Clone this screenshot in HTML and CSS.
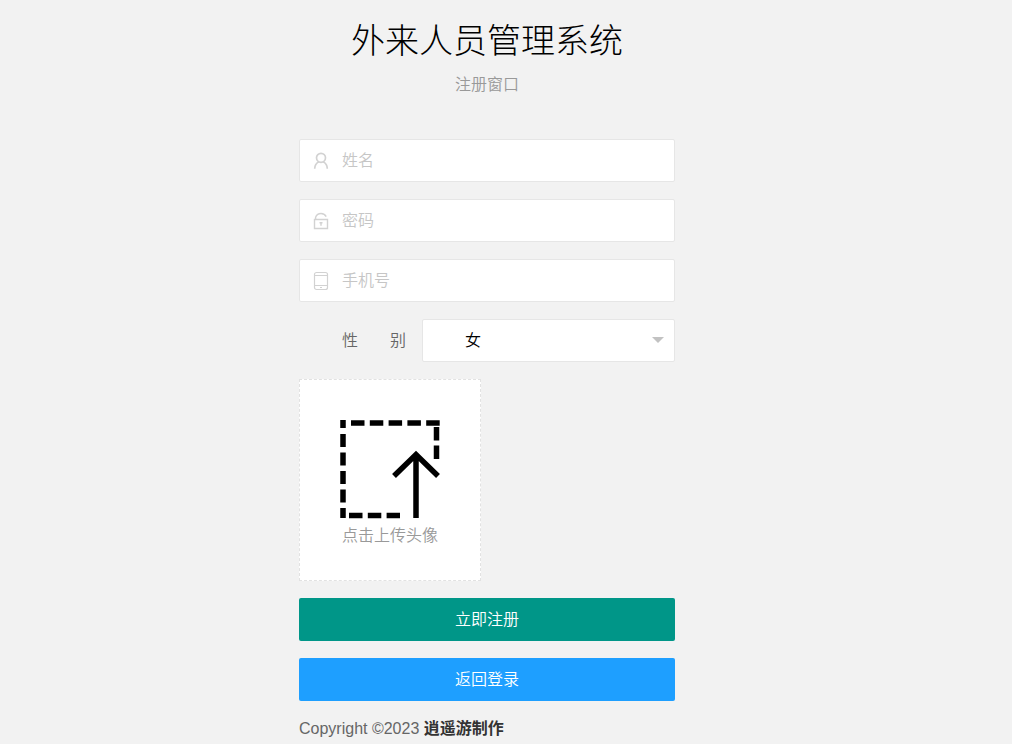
FILE: index.html
```html
<!DOCTYPE html>
<html lang="zh-CN">
<head>
  <meta charset="UTF-8" />
  <meta name="viewport" content="width=device-width, initial-scale=1" />
  <title>外来人员管理系统</title>
  <link rel="stylesheet" href="styles.css">
</head>
<body>
  <main class="register">
    <header class="register-header">
      <h1>外来人员管理系统</h1>
      <p>注册窗口</p>
    </header>

    <form class="register-form" onsubmit="return false;">
      <div class="field">
        <label for="username" aria-label="姓名">
          <svg class="icon" viewBox="0 0 16 20">
            <circle cx="8" cy="6.8" r="4.5" />
            <path d="M1.7 17.8 C1.7 14.2 3.3 12 5.8 10.7 M10.2 10.7 C12.7 12 14.3 14.2 14.3 17.8" />
          </svg>
        </label>
        <input type="text" id="username" placeholder="姓名">
      </div>

      <div class="field">
        <label for="password" aria-label="密码">
          <svg class="icon icon-lock" viewBox="0 0 16 20">
            <path d="M1.5 8.5 H14.5 V17.5 H1.5 Z M2.6 8.4 V6.2 C3.8 3.3 5.9 2.5 8 2.5 C10.3 2.5 12.2 3.5 13.2 5.6" />
            <path d="M6.5 11.7 H9.5 M8 11.5 V14.8" />
          </svg>
        </label>
        <input type="password" id="password" placeholder="密码">
      </div>

      <div class="field">
        <label for="phone" aria-label="手机号">
          <svg class="icon icon-thin" viewBox="0 0 16 20">
            <rect x="1.5" y="1.5" width="13" height="17" rx="2" />
            <path d="M1.5 4.5 H14.5 M1.5 14.5 H14.5 M7 16.5 H9" />
          </svg>
        </label>
        <input type="tel" id="phone" placeholder="手机号">
      </div>

      <div class="select-row">
        <label for="sex">性&emsp;&emsp;别</label>
        <div class="select-box">
          <select id="sex">
            <option value="男">男</option>
            <option value="女" selected>女</option>
          </select>
          <span class="arrow"></span>
        </div>
      </div>

      <label class="upload" for="avatar">
        <svg class="upload-icon" viewBox="0 0 100 100">
          <path d="M11 3 H100" stroke-dasharray="13.5 5.3" />
          <path d="M3 0 V98" stroke-dasharray="8 6 13 5.5 13 5.5 13 5.5 13 5.5 13 0" />
          <path d="M9 95.5 H60" stroke-dasharray="13.5 5.3" />
          <path d="M96.5 7 V39" stroke-dasharray="13.5 5" />
          <path d="M76 98 V35 M54 56 L76 34.5 L98 56" />
        </svg>
        <span>点击上传头像</span>
        <input type="file" id="avatar" accept="image/*">
      </label>

      <button type="submit" class="btn btn-green">立即注册</button>
      <button type="button" class="btn btn-blue">返回登录</button>
    </form>

    <footer class="copyright">Copyright ©2023 <strong>逍遥游制作</strong></footer>
  </main>
</body>
</html>
```

FILE: styles.css
```css
* {
  box-sizing: border-box;
}

body {
  margin: 0;
  padding-right: 38px;
  background-color: #f2f2f2;
  color: #666;
  font: 350 16px/24px "Liberation Sans", "Noto Sans CJK SC", sans-serif;
}

.register {
  width: 100%;
  max-width: 376px;
  margin: 0 auto;
  padding-top: 21px;
}

.register-header {
  text-align: center;
}

.register-header h1 {
  margin: 0 0 12px;
  font-size: 34px;
  line-height: 40px;
  font-weight: 300;
  color: #000;
}

.register-header p {
  margin: 0;
  color: #999;
}

.register-form {
  display: flex;
  flex-direction: column;
  gap: 17px;
  margin-top: 42px;
}

input,
select,
button {
  font: inherit;
}

/* text fields with an icon on the left */
.field {
  display: flex;
  align-items: center;
  height: 43px;
  background-color: #fff;
  border: 1px solid #e6e6e6;
  border-radius: 2px;
}

.field label {
  display: flex;
  padding: 0 13px;
}

.field input {
  flex: 1;
  min-width: 0;
  height: 100%;
  padding: 0;
  border: none;
  outline: none;
  background: none;
}

.field input::placeholder {
  color: #c6c6c6;
  opacity: 1;
}

.icon {
  width: 16px;
  height: 20px;
  fill: none;
  stroke: #d2d2d2;
  stroke-width: 1.7;
}

.icon-lock {
  stroke-width: 1.4;
}

.icon-thin {
  stroke-width: 1.2;
}

.select-row {
  display: flex;
  align-items: center;
  gap: 16px;
}

.select-row > label {
  flex: 1;
  text-align: right;
}

.select-box {
  position: relative;
  width: 253px;
}

.select-box select {
  display: block;
  width: 100%;
  height: 43px;
  padding: 0 42px;
  appearance: none;
  color: #000;
  background-color: #fff;
  border: 1px solid #e6e6e6;
  border-radius: 2px;
}

.arrow {
  position: absolute;
  top: 18px;
  right: 11px;
  border: 6px solid transparent;
  border-top-color: #c2c2c2;
  border-bottom: none;
  pointer-events: none;
}

.upload {
  display: flex;
  flex-direction: column;
  align-items: center;
  align-self: flex-start;
  padding: 40px 40px 32px;
  background-color: #fff;
  border: 1px dashed #e2e2e2;
  color: #999;
  cursor: pointer;
}

.upload input {
  display: none;
}

.upload-icon {
  width: 100px;
  height: 100px;
  margin-bottom: 4px;
  fill: none;
  stroke: #000;
  stroke-width: 5.5;
}

.btn {
  height: 43px;
  padding: 0 18px;
  border: none;
  border-radius: 2px;
  color: #fff;
  cursor: pointer;
}

.btn:hover {
  opacity: 0.8;
}

.btn-green {
  background-color: #009688;
}

.btn-blue {
  background-color: #1e9fff;
}

.copyright {
  margin-top: 16px;
}

.copyright strong {
  color: #333;
}
```
